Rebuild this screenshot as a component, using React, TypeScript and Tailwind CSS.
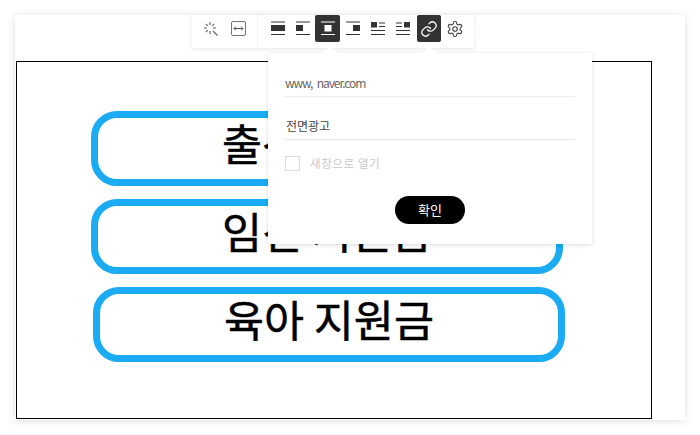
const font = { kr: "font-['Noto_Sans_CJK_KR','Noto_Sans',sans-serif]" }

function AlignIcon({ kind }: { kind: string }) {
  // alignment glyphs: dark block with thin rules, 16x15 box
  const c = 'currentColor'
  if (kind === 'full')
    return (
      <svg width="16" height="15" viewBox="0 0 16 15">
        <rect x="1" y="0.5" width="14" height="1" fill={c} />
        <rect x="1" y="4" width="14" height="6" fill={c} />
        <rect x="1" y="13" width="14" height="1" fill={c} />
      </svg>
    )
  if (kind === 'left')
    return (
      <svg width="16" height="15" viewBox="0 0 16 15">
        <rect x="1" y="0.5" width="14" height="1" fill={c} />
        <rect x="1" y="4" width="7" height="6" fill={c} />
        <rect x="1" y="13" width="14" height="1" fill={c} />
      </svg>
    )
  if (kind === 'center')
    return (
      <svg width="16" height="15" viewBox="0 0 16 15">
        <rect x="1" y="0.5" width="14" height="1" fill={c} />
        <rect x="4.5" y="4" width="7" height="6.5" fill={c} />
        <rect x="1" y="13" width="14" height="1" fill={c} />
      </svg>
    )
  if (kind === 'right')
    return (
      <svg width="16" height="15" viewBox="0 0 16 15">
        <rect x="1" y="0.5" width="14" height="1" fill={c} />
        <rect x="8" y="4" width="7" height="6" fill={c} />
        <rect x="1" y="13" width="14" height="1" fill={c} />
      </svg>
    )
  if (kind === 'wrapLeft')
    return (
      <svg width="16" height="15" viewBox="0 0 16 15">
        <rect x="1" y="1" width="6" height="5.5" fill={c} />
        <rect x="9" y="1.5" width="6" height="1" fill={c} />
        <rect x="9" y="5" width="6" height="1" fill={c} />
        <rect x="1" y="9" width="14" height="1" fill={c} />
        <rect x="1" y="13" width="14" height="1" fill={c} />
      </svg>
    )
  return (
    <svg width="16" height="15" viewBox="0 0 16 15">
      <rect x="1" y="1.5" width="6" height="1" fill={c} />
      <rect x="1" y="5" width="6" height="1" fill={c} />
      <rect x="9" y="1" width="6" height="5.5" fill={c} />
      <rect x="1" y="9" width="14" height="1" fill={c} />
      <rect x="1" y="13" width="14" height="1" fill={c} />
    </svg>
  )
}

function Toolbar() {
  return (
    <div className="absolute left-[192px] top-[15px] flex h-[33px] w-[282px] items-start bg-white pl-[7px] text-[#333] shadow-[0_1px_4px_rgba(0,0,0,0.1)]">
      {/* effect + resize */}
      <div className="flex h-full w-[59px] items-start border-r border-[#f2f2f2]">
        <div className="flex h-[27px] w-[24px] items-center justify-center">
          <svg width="16" height="16" viewBox="0 0 16 16" fill="none" stroke="#666" strokeWidth="1.2">
            <path d="M7 1v3M7 10v3M1 7h3M10 7h3M2.8 2.8l2 2M11.2 2.8l-2 2M2.8 11.2l2-2M10 10l4.5 4.5" />
          </svg>
        </div>
        <div className="ml-[3px] flex h-[27px] w-[24px] items-center justify-center">
          <svg width="15" height="15" viewBox="0 0 15 15" fill="none" stroke="#555" strokeWidth="1">
            <rect x="0.5" y="0.5" width="14" height="14" rx="1.5" stroke="#777" />
            <path d="M3 7.5h9M4.8 5.7L3 7.5l1.8 1.8M10.2 5.7L12 7.5l-1.8 1.8" />
          </svg>
        </div>
      </div>
      {/* alignment */}
      <div className="ml-[7px] flex items-start">
        {['full', 'left', 'center', 'right', 'wrapLeft', 'wrapRight'].map((kind) => (
          <div
            key={kind}
            className={
              kind === 'center'
                ? 'flex h-[27px] w-[25px] items-center justify-center rounded-[2px] bg-[#333] text-white'
                : 'flex h-[27px] w-[25px] items-center justify-center text-[#333]'
            }
          >
            <AlignIcon kind={kind} />
          </div>
        ))}
        <div className="ml-[2px] flex h-[27px] w-[24px] items-center justify-center rounded-[2px] bg-[#333]">
          <svg width="18" height="18" viewBox="0 0 24 24" fill="none" stroke="#fff" strokeWidth="1.7" strokeLinecap="round" strokeLinejoin="round">
            <path d="M10 13a5 5 0 0 0 7.5.5l3-3a5 5 0 0 0-7-7l-1.7 1.7" />
            <path d="M14 11a5 5 0 0 0-7.5-.5l-3 3a5 5 0 0 0 7 7l1.7-1.7" />
          </svg>
        </div>
        <div className="ml-[2px] flex h-[27px] w-[24px] items-center justify-center">
          <svg width="18" height="18" viewBox="0 0 24 24" fill="none" stroke="#444" strokeWidth="1.5" strokeLinecap="round" strokeLinejoin="round">
            <path d="M12.2 2h-.4a2 2 0 0 0-2 2v.2a2 2 0 0 1-1 1.7l-.4.3a2 2 0 0 1-2 0l-.2-.1a2 2 0 0 0-2.7.7l-.2.4a2 2 0 0 0 .7 2.7l.2.1a2 2 0 0 1 1 1.7v.5a2 2 0 0 1-1 1.8l-.2.1a2 2 0 0 0-.7 2.7l.2.4a2 2 0 0 0 2.7.7l.2-.1a2 2 0 0 1 2 0l.4.3a2 2 0 0 1 1 1.7v.2a2 2 0 0 0 2 2h.4a2 2 0 0 0 2-2v-.2a2 2 0 0 1 1-1.7l.4-.3a2 2 0 0 1 2 0l.2.1a2 2 0 0 0 2.7-.7l.2-.4a2 2 0 0 0-.7-2.7l-.2-.1a2 2 0 0 1-1-1.8v-.5a2 2 0 0 1 1-1.7l.2-.1a2 2 0 0 0 .7-2.7l-.2-.4a2 2 0 0 0-2.7-.7l-.2.1a2 2 0 0 1-2 0l-.4-.3a2 2 0 0 1-1-1.7V4a2 2 0 0 0-2-2z" />
            <circle cx="12" cy="12" r="3" />
          </svg>
        </div>
      </div>
    </div>
  )
}

function LinkPopover() {
  return (
    <div className={`absolute left-[268px] top-[53px] h-[191px] w-[324px] bg-white px-[17px] shadow-[0_1px_4px_rgba(0,0,0,0.15)] ${font.kr}`}>
      {/* arrows up to the toolbar */}
      <div className="absolute left-[57px] top-[-5px] h-[10px] w-[10px] rotate-45 bg-white" />
      <div className="absolute left-[156px] top-[-5px] h-[10px] w-[10px] rotate-45 bg-white" />
      <div className="mt-[20px] flex h-[24px] w-[290px] items-start whitespace-pre border-b border-[#eee] text-[12px] leading-[20px] tracking-[-1.1px] text-[#666] [word-spacing:3px]">
        www, naver.com
      </div>
      <div className="mt-[19px] flex h-[24px] w-[290px] items-start border-b border-[#e5e5e5] pl-[1px] text-[12px] leading-[20px] text-[#444]">
        전면광고
      </div>
      <div className="mt-[15px] flex items-center">
        <div className="h-[15px] w-[15px] border border-[#ddd]" />
        <span className="ml-[10px] pt-[1px] text-[11.5px] leading-[15px] tracking-[0.6px] text-[#c8c8c8]">새창으로 열기</span>
      </div>
      <div className="mt-[25px] flex w-[290px] justify-center">
        <button className="h-[28px] w-[70px] rounded-full bg-black text-[13px] leading-[28px] text-white">확인</button>
      </div>
    </div>
  )
}

function Pill({ label, shifted }: { label: string; shifted?: boolean }) {
  return (
    <div
      className={
        shifted
          ? 'ml-[76px] flex h-[75px] w-[472px] items-center justify-center rounded-[26px] border-[7px] border-[#1aabf3] pb-[12px]'
          : 'ml-[74px] flex h-[75px] w-[472px] items-center justify-center rounded-[26px] border-[7px] border-[#1aabf3] pb-[12px]'
      }
    >
      <span className="text-[43.5px] leading-none text-black [-webkit-text-stroke:0.5px_black]">{label}</span>
    </div>
  )
}

export default function App() {
  return (
    <div className={`relative h-[435px] w-[700px] overflow-hidden bg-white pl-[15px] pt-[15px] ${font.kr}`}>
      <div className="h-[405px] w-[670px] bg-white pl-[1px] pt-[46px] shadow-[0_1px_8px_rgba(0,0,0,0.13)]">
        <div className="flex h-[358px] w-[636px] flex-col gap-[13px] border border-black pt-[49px]">
          <Pill label="출산 지원금" />
          <Pill label="임신 지원금" />
          <Pill label="육아 지원금" shifted />
        </div>
      </div>
      <Toolbar />
      <LinkPopover />
    </div>
  )
}
